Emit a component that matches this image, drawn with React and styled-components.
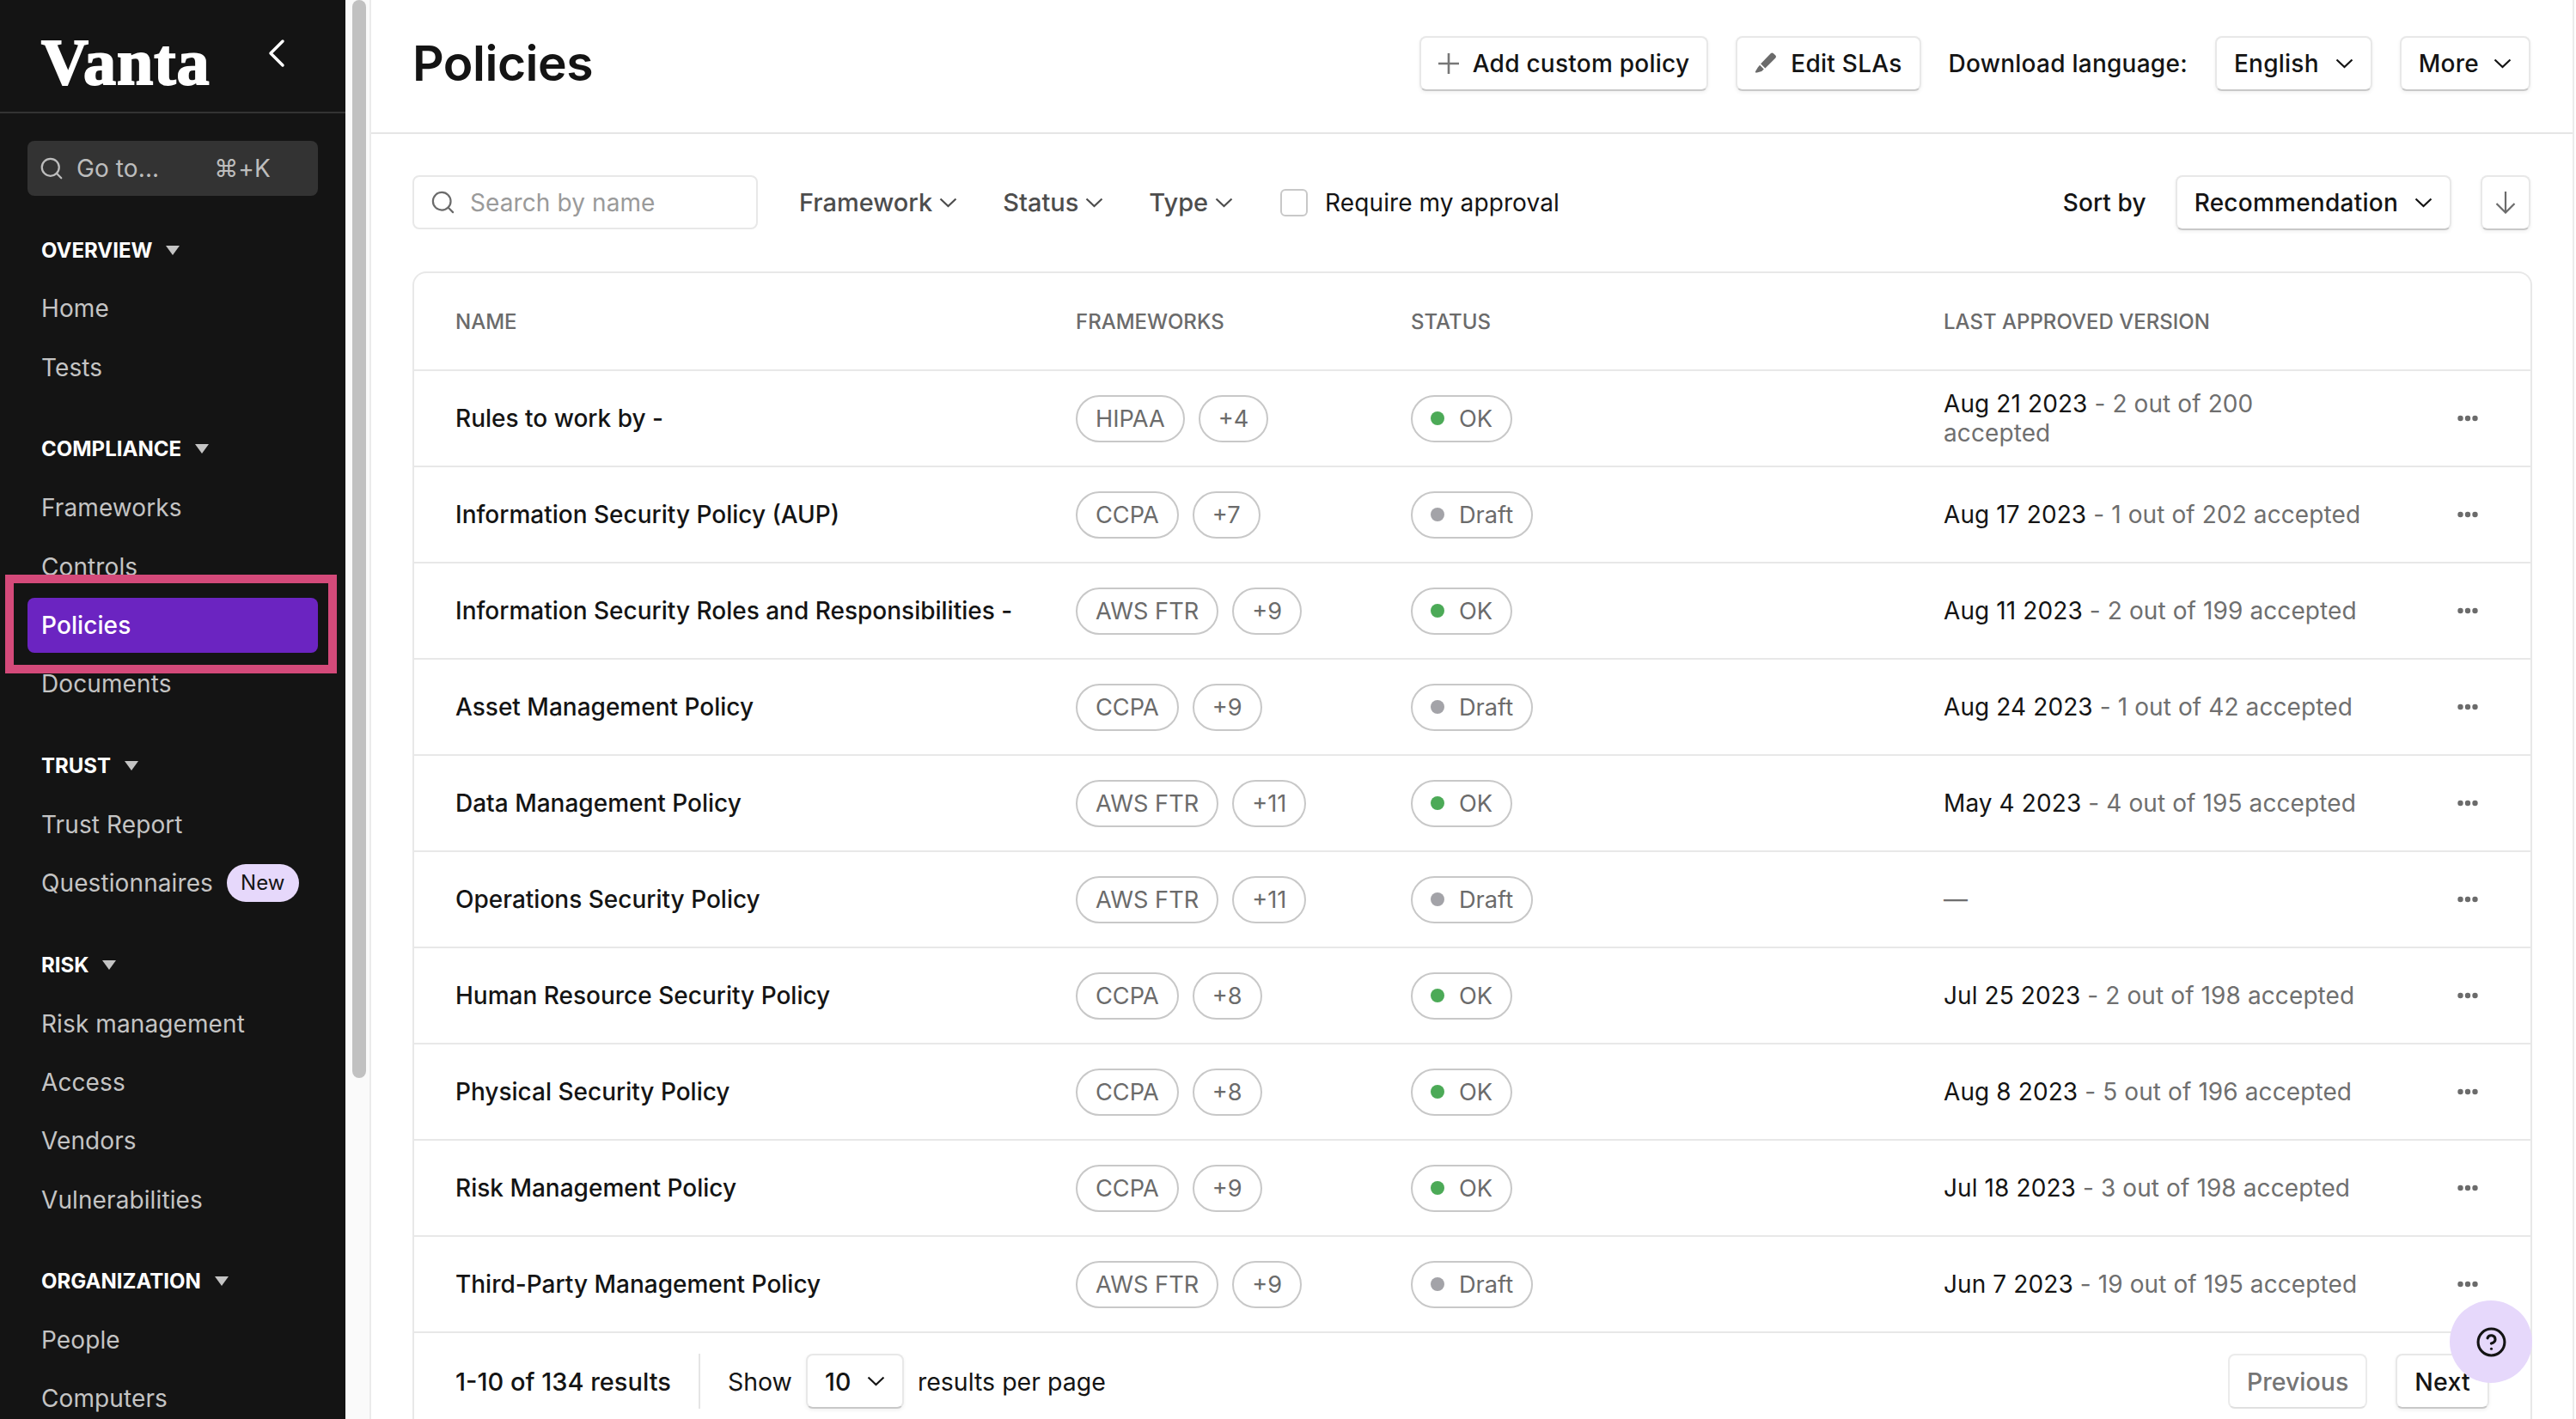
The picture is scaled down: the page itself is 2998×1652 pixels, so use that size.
import React from "react";
import styled, { createGlobalStyle } from "styled-components";
import { ChevronLeft, CircleHelp, Search } from "lucide-react";

const navSections = [
  { title: "OVERVIEW", items: ["Home", "Tests"] },
  { title: "COMPLIANCE", items: ["Frameworks", "Controls", "Policies", "Documents"] },
  { title: "TRUST", items: ["Trust Report", "Questionnaires"] },
  { title: "RISK", items: ["Risk management", "Access", "Vendors", "Vulnerabilities"] },
  { title: "ORGANIZATION", items: ["People", "Computers"] },
];

const policies = [
  ["Rules to work by -", "HIPAA", "+4", "OK", "Aug 21 2023", "2 out of 200 accepted"],
  ["Information Security Policy (AUP)", "CCPA", "+7", "Draft", "Aug 17 2023", "1 out of 202 accepted"],
  ["Information Security Roles and Responsibilities -", "AWS FTR", "+9", "OK", "Aug 11 2023", "2 out of 199 accepted"],
  ["Asset Management Policy", "CCPA", "+9", "Draft", "Aug 24 2023", "1 out of 42 accepted"],
  ["Data Management Policy", "AWS FTR", "+11", "OK", "May 4 2023", "4 out of 195 accepted"],
  ["Operations Security Policy", "AWS FTR", "+11", "Draft", null, null],
  ["Human Resource Security Policy", "CCPA", "+8", "OK", "Jul 25 2023", "2 out of 198 accepted"],
  ["Physical Security Policy", "CCPA", "+8", "OK", "Aug 8 2023", "5 out of 196 accepted"],
  ["Risk Management Policy", "CCPA", "+9", "OK", "Jul 18 2023", "3 out of 198 accepted"],
  ["Third-Party Management Policy", "AWS FTR", "+9", "Draft", "Jun 7 2023", "19 out of 195 accepted"],
];

const Chevron = () => (
  <svg width="21" height="12" viewBox="0 0 21 12" fill="none" stroke="currentColor" strokeWidth="2.2">
    <polyline points="1.5,1.5 10.5,10 19.5,1.5" />
  </svg>
);

const App = () => {
  return (
    <>
      <GlobalStyle />
      <Page>
        <Sidebar>
          <LogoRow>
            <Logo>Vanta</Logo>
            <ChevronLeft size={56} strokeWidth={1.5} color="#fff" />
          </LogoRow>
          <GoTo>
            <Search size={30} strokeWidth={1.8} />
            <span>Go to...</span>
            <Shortcut>⌘+K</Shortcut>
          </GoTo>
          {navSections.map((section) => (
            <NavSection key={section.title}>
              <NavTitle>
                {section.title}
                <Triangle />
              </NavTitle>
              {section.items.map((item) => (
                <NavItem key={item} $active={item === "Policies"}>
                  {item}
                  {item === "Questionnaires" && <NewBadge>New</NewBadge>}
                </NavItem>
              ))}
            </NavSection>
          ))}
          <Highlight />
        </Sidebar>

        <ScrollGutter>
          <ScrollThumb />
        </ScrollGutter>

        <Main>
          <Header>
            <Title>Policies</Title>
            <HeaderActions>
              <Button>
                <svg width="24" height="24" viewBox="0 0 24 24" stroke="#777" strokeWidth="2.6">
                  <path d="M12 0v24M0 12h24" />
                </svg>
                Add custom policy
              </Button>
              <Button>
                <svg width="26" height="26" viewBox="0 0 24 24" fill="#6b6b6b">
                  <path d="M17.3 1.2a2.2 2.2 0 0 1 3 0l2 1.9a2.2 2.2 0 0 1 0 3.1L11.4 17 6.6 12.2zM5.6 13.6l4.4 4.5-2.4 2.1-4.9 1.6H.9v-1.3l2.6-4.4z" />
                </svg>
                Edit SLAs
              </Button>
              <HeaderLabel>Download language:</HeaderLabel>
              <SelectButton>
                English
                <Chevron />
              </SelectButton>
              <MoreButton>
                More
                <Chevron />
              </MoreButton>
            </HeaderActions>
          </Header>

          <Toolbar>
            <SearchBox>
              <Search size={31} strokeWidth={1.7} color="#6b6b6b" />
              Search by name
            </SearchBox>
            <Filter $left={48}>
              Framework
              <Chevron />
            </Filter>
            <Filter $left={53}>
              Status
              <Chevron />
            </Filter>
            <Filter $left={53}>
              Type
              <Chevron />
            </Filter>
            <Approval>
              <Checkbox />
              Require my approval
            </Approval>
            <SortLabel>Sort by</SortLabel>
            <SelectButton>
              Recommendation
              <Chevron />
            </SelectButton>
            <IconButton>
              <svg width="24" height="26" viewBox="0 0 24 26" fill="none" stroke="#6b6b6b" strokeWidth="2.2">
                <path d="M12 0v24M1.5 14 12 24.5 22.5 14" />
              </svg>
            </IconButton>
          </Toolbar>

          <Table>
            <HeadRow>
              <span>NAME</span>
              <span>FRAMEWORKS</span>
              <span>STATUS</span>
              <span>LAST APPROVED VERSION</span>
            </HeadRow>
            {policies.map(([name, framework, more, status, date, accepted]) => (
              <Row key={name}>
                <Name>{name}</Name>
                <Chips>
                  <Chip>{framework}</Chip>
                  <Chip>{more}</Chip>
                </Chips>
                <Chips>
                  <Chip>
                    <Dot $ok={status === "OK"} />
                    {status}
                  </Chip>
                </Chips>
                <Approved>
                  {date ? (
                    <>
                      <ApprovedDate>{date}</ApprovedDate> - {accepted}
                    </>
                  ) : (
                    "—"
                  )}
                </Approved>
                <svg width="24" height="8" viewBox="0 0 24 8" fill="#6b6b6b">
                  <circle cx="3.5" cy="4" r="3.2" />
                  <circle cx="12" cy="4" r="3.2" />
                  <circle cx="20.5" cy="4" r="3.2" />
                </svg>
              </Row>
            ))}
            <Footer>
              <Results>1-10 of 134 results</Results>
              <FooterDivider />
              <span>Show</span>
              <PageSize>
                10
                <Chevron />
              </PageSize>
              <span>results per page</span>
              <Pager>
                <Button $muted>Previous</Button>
                <Button>Next</Button>
              </Pager>
            </Footer>
          </Table>
        </Main>

        <HelpBubble>
          <CircleHelp size={37} strokeWidth={2} color="#141414" />
        </HelpBubble>
      </Page>
    </>
  );
};

const GlobalStyle = createGlobalStyle`
  html, body {
    margin: 0;
    padding: 0;
    background: #fff;
  }
  body {
    font-family: Inter, "Liberation Sans", sans-serif;
    font-size: 28px;
    letter-spacing: 0.1px;
    color: #141414;
  }
`;
const Page = styled.div`
  position: relative;
  display: flex;
  width: 2998px;
  height: 1652px;
  overflow: hidden;
  background: #fff;
`;
const Sidebar = styled.aside`
  position: relative;
  flex: 0 0 402px;
  background: #141414;
  overflow: hidden;
`;
const LogoRow = styled.div`
  display: flex;
  align-items: center;
  justify-content: space-between;
  box-sizing: border-box;
  height: 132px;
  padding: 14px 52px 0 48px;
  border-bottom: 2px solid #333;
  svg {
    margin-bottom: 20px;
  }
`;
const Logo = styled.div`
  font-family: "Liberation Serif", serif;
  font-weight: 700;
  font-size: 76px;
  line-height: 1;
  letter-spacing: 1px;
  color: #fff;
  -webkit-text-stroke: 2px #fff;
`;
const GoTo = styled.div`
  display: flex;
  align-items: center;
  gap: 14px;
  height: 64px;
  margin: 32px 32px 0;
  padding: 0 13px;
  border-radius: 8px;
  background: #333;
  color: #bdbdbd;
`;
const Shortcut = styled.span`
  margin-left: 50px;
`;
const NavSection = styled.section`
  display: flex;
  flex-direction: column;
  gap: 4.4px;
  margin: 31px 32px 0;
`;
const NavTitle = styled.div`
  display: flex;
  align-items: center;
  gap: 16px;
  height: 64px;
  padding-left: 16px;
  font-size: 24px;
  font-weight: 700;
  letter-spacing: 0;
  color: #fff;
`;
const Triangle = styled.i`
  width: 0;
  height: 0;
  border-left: 8px solid transparent;
  border-right: 8px solid transparent;
  border-top: 11px solid #c4c4c4;
`;
const NavItem = styled.div`
  display: flex;
  align-items: center;
  gap: 16px;
  height: 64px;
  padding-left: 16px;
  border-radius: 8px;
  color: ${(p) => (p.$active ? "#fff" : "#c4c4c4")};
  background: ${(p) => (p.$active ? "#6b24c1" : "transparent")};
  font-weight: ${(p) => (p.$active ? 500 : 400)};
`;
const NewBadge = styled.span`
  padding: 7px 16px;
  border-radius: 22px;
  background: #e6d8fb;
  color: #141414;
  font-size: 24px;
  line-height: 30px;
`;
const Highlight = styled.div`
  position: absolute;
  left: 6px;
  top: 669px;
  width: 386px;
  height: 115px;
  box-sizing: border-box;
  border: 10px solid #d44a7a;
`;
const ScrollGutter = styled.div`
  flex: 0 0 28px;
  padding-left: 8px;
  box-sizing: border-box;
  background: #fafafa;
`;
const ScrollThumb = styled.div`
  width: 16px;
  height: 1255px;
  border-radius: 8px;
  background: #c1c1c1;
`;
const Main = styled.main`
  flex: 0 0 2566px;
  box-sizing: border-box;
  border-left: 2px solid #ebebeb;
  border-right: 2px solid #ebebeb;
`;
const Header = styled.header`
  display: flex;
  align-items: center;
  justify-content: space-between;
  box-sizing: border-box;
  height: 156px;
  padding: 42px 49px 49px 48px;
  border-bottom: 2px solid #e5e5e5;
`;
const Title = styled.h1`
  margin: 0;
  font-size: 57px;
  font-weight: 600;
  letter-spacing: -0.5px;
`;
const HeaderActions = styled.div`
  display: flex;
  align-items: center;
  gap: 32px;
`;
const HeaderLabel = styled.span`
  font-weight: 500;
  letter-spacing: 0.25px;
`;
const Button = styled.div`
  display: flex;
  align-items: center;
  gap: 16px;
  box-sizing: border-box;
  height: 64px;
  padding: 0 20px;
  border: 2px solid ${(p) => (p.$muted ? "#ebebeb" : "#e8e8e8")};
  border-bottom-color: ${(p) => (p.$muted ? "#e0e0e0" : "#c8c8c8")};
  border-radius: 8px;
  background: #fff;
  box-shadow: ${(p) => (p.$muted ? "none" : "0 2px 4px rgba(0, 0, 0, 0.06)")};
  color: ${(p) => (p.$muted ? "#757575" : "#141414")};
  font-weight: 500;
  letter-spacing: ${(p) => (p.$muted ? "0" : "0.25px")};
  white-space: nowrap;
`;
const SelectButton = styled(Button)`
  gap: 19px;
`;
const MoreButton = styled(Button)`
  gap: 17px;
`;
const IconButton = styled(Button)`
  justify-content: center;
  width: 58px;
  margin-left: 34px;
  padding: 0;
`;
const Toolbar = styled.div`
  display: flex;
  align-items: center;
  height: 63px;
  margin: 48px 49px 49px 48px;
`;
const SearchBox = styled.div`
  display: flex;
  align-items: center;
  gap: 16px;
  box-sizing: border-box;
  width: 402px;
  height: 63px;
  padding: 0 18px;
  border: 2px solid #e8e8e8;
  border-radius: 8px;
  color: #9a9a9a;
`;
const Filter = styled.div`
  display: flex;
  align-items: center;
  gap: 8px;
  margin-left: ${(p) => p.$left}px;
  color: #4d4d4d;
  font-size: 29px;
  font-weight: 500;
  letter-spacing: 0;
`;
const Approval = styled.label`
  display: flex;
  align-items: center;
  gap: 20px;
  margin-left: 55px;
`;
const Checkbox = styled.span`
  box-sizing: border-box;
  width: 32px;
  height: 32px;
  border: 2px solid #c8c8c8;
  border-radius: 6px;
`;
const SortLabel = styled.span`
  margin: 0 34px 0 auto;
  font-weight: 500;
`;
const Table = styled.div`
  box-sizing: border-box;
  height: 1340px;
  margin: 0 47px 0 48px;
  border: 2px solid #e8e8e8;
  border-bottom: 0;
  border-radius: 16px 16px 0 0;
`;
const rowGrid = `
  display: grid;
  grid-template-columns: 722px 390px 620px 598px 24px;
  align-items: center;
  box-sizing: border-box;
  padding-left: 48px;
  border-bottom: 2px solid #e8e8e8;
`;
const HeadRow = styled.div`
  ${rowGrid}
  height: 114px;
  color: #6b6b6b;
  font-size: 24px;
  font-weight: 500;
  letter-spacing: 0;
`;
const Row = styled.div`
  ${rowGrid}
  height: 112px;
`;
const Name = styled.div`
  font-weight: 500;
  letter-spacing: 0;
`;
const Chips = styled.div`
  display: flex;
  gap: 16px;
`;
const Chip = styled.span`
  display: flex;
  align-items: center;
  gap: 17px;
  box-sizing: border-box;
  height: 55px;
  padding: 0 21px;
  border: 2px solid #c8c8c8;
  border-radius: 28px;
  color: #6b6b6b;
  font-size: 27.2px;
  letter-spacing: 0;
`;
const Dot = styled.i`
  width: 16px;
  height: 16px;
  border-radius: 50%;
  background: ${(p) => (p.$ok ? "#4caa57" : "#a3a3a8")};
`;
const Approved = styled.div`
  width: 486px;
  line-height: 34px;
  color: #6f6f6f;
`;
const ApprovedDate = styled.span`
  color: #141414;
`;
const Footer = styled.div`
  display: flex;
  align-items: center;
  gap: 16px;
  padding: 24px 48px 0;
  font-size: 28.5px;
  letter-spacing: 0;
`;
const Results = styled.span`
  font-size: 29px;
  font-weight: 500;
`;
const FooterDivider = styled.span`
  width: 2px;
  height: 64px;
  margin: 0 16px;
  background: #e5e5e5;
`;
const PageSize = styled(Button)`
  gap: 18px;
  width: 114px;
`;
const Pager = styled.div`
  display: flex;
  gap: 33px;
  margin-left: auto;
`;
const HelpBubble = styled.div`
  position: absolute;
  right: 51px;
  bottom: 42px;
  display: flex;
  align-items: center;
  justify-content: center;
  width: 96px;
  height: 96px;
  border-radius: 50%;
  background: #e6d8fb;
`;

export default App;
